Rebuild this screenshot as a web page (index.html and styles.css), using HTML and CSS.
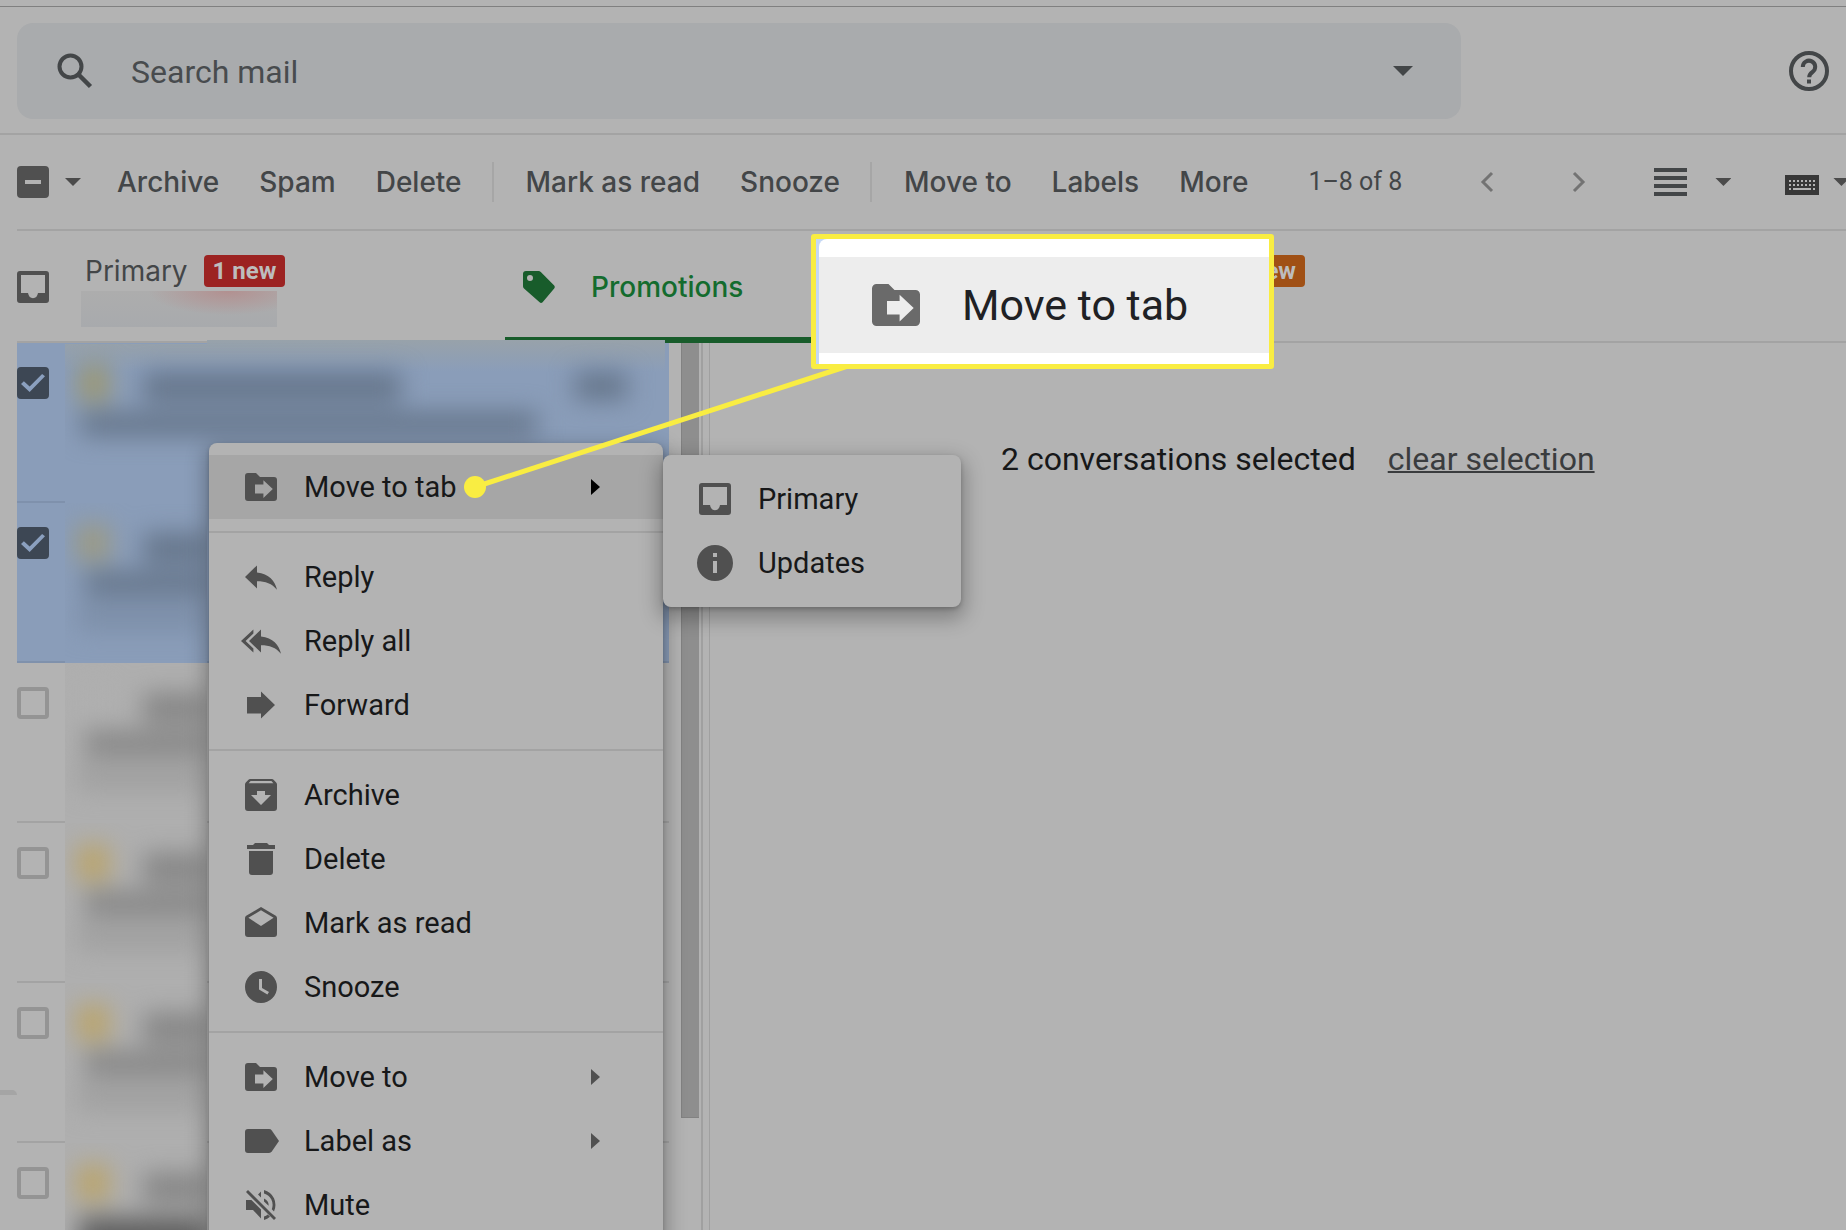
FILE: index.html
```html
<!DOCTYPE html>
<html lang="en">
<head>
<meta charset="utf-8">
<title>Mail – Promotions</title>
<link rel="stylesheet" href="styles.css">
</head>
<body>
<svg class="sprite" aria-hidden="true">
  <symbol id="i-folder" viewBox="0 0 20 20"><path fill-rule="evenodd" d="M3.500 3H7.500L9.500 5H16.500A1.500 1.500 0 0 1 18 6.500V15.500A1.500 1.500 0 0 1 16.500 17H3.500A1.500 1.500 0 0 1 2 15.500V4.500A1.500 1.500 0 0 1 3.500 3ZM11.200 6.600V8.700H7V13.200H11.200V15.500L15.900 11Z"/></symbol>
  <symbol id="i-reply" viewBox="0 0 20 20"><path d="M8 7.700V4.200L2 10L8 15.700V12.100C12.200 12.100 15.500 13.200 18 16.400C17 11.700 14 8.500 8 7.700Z"/></symbol>
  <symbol id="i-replyall" viewBox="0 0 20 20"><path d="M10 7.700V4.200L4 10L10 15.700V12.100C14.200 12.100 17.500 13.200 20 16.400C19 11.700 16 8.500 10 7.700Z"/><path d="M6.200 4.200V6.200L2.300 10L6.200 13.700V15.700L0 10Z"/></symbol>
  <symbol id="i-forward" viewBox="0 0 20 20"><path d="M3 6H10V3.200L17 10L10 16.800V14.200H3Z"/></symbol>
  <symbol id="i-archive" viewBox="0 0 20 20"><path fill-rule="evenodd" d="M4.600 2H15.400Q16 2 16.400 2.500L17.600 3.700Q18 4.200 18 4.800V16.500A1.500 1.500 0 0 1 16.500 18H3.500A1.500 1.500 0 0 1 2 16.500V4.800Q2 4.200 2.400 3.700L3.600 2.500Q4 2 4.600 2ZM4.800 3L3.800 4.100H16.200L15.200 3ZM8 8V10H5L10 15L15 10H12V8Z"/></symbol>
  <symbol id="i-delete" viewBox="0 0 20 20"><path d="M3 3H6L7 2H13L14 3H17V5H3ZM4 6H16V16.500A1.500 1.500 0 0 1 14.500 18H5.500A1.500 1.500 0 0 1 4 16.500Z"/></symbol>
  <symbol id="i-read" viewBox="0 0 20 20"><path fill-rule="evenodd" d="M10 2L17.400 6.400Q18 6.800 18 7.500V15.500A1.500 1.500 0 0 1 16.500 17H3.500A1.500 1.500 0 0 1 2 15.500V7.500Q2 6.800 2.600 6.400ZM10 3.600L3.700 7.400L10 11.500L16.300 7.400Z"/></symbol>
  <symbol id="i-snooze" viewBox="0 0 20 20"><path fill-rule="evenodd" d="M10 2A8 8 0 1 0 10 18A8 8 0 1 0 10 2ZM9 6H10.500V10.500L14 12.500L13.200 13.800L9 11.300Z"/></symbol>
  <symbol id="i-label" viewBox="0 0 20 20"><path d="M3.500 4H14Q14.900 4 15.400 4.700L19 10L15.400 15.300Q14.900 16 14 16H3.500A1.500 1.500 0 0 1 2 14.500V5.500A1.500 1.500 0 0 1 3.500 4Z"/></symbol>
  <symbol id="i-mute" viewBox="0 0 20 20"><path d="M3.500 2.500L17.500 16.500L16.500 17.500L2.500 3.500ZM2.500 7.500H5.200L10 12.300V16.700L6 12.500H2.500ZM10 3.300V6.300L8.500 4.800ZM11.500 6.800Q14 8 13.800 10.400L11.500 8.200ZM11.500 2.500A7.700 7.700 0 0 1 16.500 13.200L15.400 12.100A6 6 0 0 0 11.500 4.200ZM11.500 15.800Q12.600 15.500 13.400 14.800L14.500 15.900Q13.200 17 11.500 17.500Z"/></symbol>
  <symbol id="i-inbox" viewBox="0 0 20 20"><path fill-rule="evenodd" d="M3.500 2H16.500A1.500 1.500 0 0 1 18 3.500V16.500A1.500 1.500 0 0 1 16.500 18H3.500A1.500 1.500 0 0 1 2 16.500V3.500A1.500 1.500 0 0 1 3.500 2ZM4 4V13H7.500Q8 15.600 10 15.600T12.500 13H16V4Z"/></symbol>
  <symbol id="i-info" viewBox="0 0 20 20"><path fill-rule="evenodd" d="M10 1A9 9 0 1 0 10 19A9 9 0 1 0 10 1ZM9 5H11V7H9ZM9 9H11V15H9Z"/></symbol>
  <symbol id="i-tag" viewBox="0 0 20 20"><path fill-rule="evenodd" d="M3.500 2H9.800Q10.400 2 10.900 2.500L17.600 9.300Q18.300 10 17.600 10.800L11.800 17.600Q11 18.300 10.300 17.600L2.500 10.700Q2 10.200 2 9.600V3.500A1.500 1.500 0 0 1 3.500 2ZM5.500 4A1.500 1.500 0 1 0 5.500 7A1.500 1.500 0 1 0 5.500 4Z"/></symbol>
</svg>

<header class="header">
  <form class="search">
    <button class="icon-btn" type="button" aria-label="Search">
      <svg class="search-icon" viewBox="0 0 36 36"><circle cx="13.500" cy="13.500" r="11" fill="none" stroke="currentColor" stroke-width="4"/><path d="M21 21L33.500 33.500" stroke="currentColor" stroke-width="4.500"/></svg>
    </button>
    <input class="search-input" type="text" placeholder="Search mail" aria-label="Search mail">
    <button class="icon-btn" type="button" aria-label="Search options"><span class="caret caret-lg"></span></button>
  </form>
  <button class="icon-btn" type="button" aria-label="Help">
    <svg class="help-icon" viewBox="0 0 40 40"><circle cx="20" cy="20" r="18" fill="none" stroke="currentColor" stroke-width="4"/><path d="M13.800 16A6.200 6.200 0 1 1 23.500 21C21.300 22.500 20.200 23.500 20.200 26.200" fill="none" stroke="currentColor" stroke-width="4"/><path d="M18 28.500H22V32.500H18Z" fill="currentColor"/></svg>
  </button>
</header>

<div class="toolbar">
  <input class="box mixed" type="checkbox" aria-label="Select all">
  <button class="icon-btn pick" type="button" aria-label="Select"><span class="caret"></span></button>
  <div class="actions">
    <button type="button">Archive</button><button type="button">Spam</button><button type="button">Delete</button>
  </div>
  <div class="actions">
    <button type="button">Mark as read</button><button type="button">Snooze</button>
  </div>
  <div class="actions">
    <button type="button">Move to</button><button type="button">Labels</button><button type="button">More</button>
  </div>
  <div class="tools">
    <span class="count">1–8 of 8</span>
    <div class="pager">
      <button class="icon-btn" type="button" aria-label="Newer"><svg width="14" height="22" viewBox="0 0 14 22"><path d="M12 2L3 11L12 20" fill="none" stroke="#737373" stroke-width="3"/></svg></button>
      <button class="icon-btn" type="button" aria-label="Older"><svg width="14" height="22" viewBox="0 0 14 22"><path d="M2 2L11 11L2 20" fill="none" stroke="#737373" stroke-width="3"/></svg></button>
    </div>
    <button class="icon-btn split" type="button" aria-label="Split pane"><svg width="33" height="28" viewBox="0 0 33 28"><path d="M0 0H33V4H0ZM0 8H33V12H0ZM0 16H33V20H0ZM0 24H33V28H0Z" fill="currentColor"/></svg><span class="caret"></span></button>
    <button class="icon-btn keys" type="button" aria-label="Input tools"><svg width="34" height="20" viewBox="0 0 34 20"><path d="M0 0H34V20H0Z" fill="#383838"/><path d="M4 6H31M4 10H31M4 14H31" stroke="#b3b3b3" stroke-width="2" stroke-dasharray="2 2"/><path d="M9 14H26" stroke="#b3b3b3" stroke-width="2"/></svg><span class="caret"></span></button>
  </div>
</div>

<nav class="tabs">
  <a class="tab first" href="#primary">
    <svg class="icon"><use href="#i-inbox"/></svg>
    <span class="tab-body"><span class="tab-title">Primary <span class="badge">1 new</span></span><span class="senders"></span></span>
  </a>
  <a class="tab active" href="#promotions"><svg class="icon"><use href="#i-tag"/></svg><span>Promotions</span></a>
  <a class="tab last" href="#updates"><span class="badge orange">new</span></a>
</nav>

<main class="main">
  <div class="list">
    <div class="row selected lead"><input class="box" type="checkbox" checked aria-label="Select conversation 1"><div class="preview"></div></div>
    <div class="row selected"><input class="box" type="checkbox" checked aria-label="Select conversation 2"><div class="preview"></div></div>
    <div class="row plain"><input class="box" type="checkbox" aria-label="Select conversation 3"><div class="preview"></div></div>
    <div class="row"><input class="box" type="checkbox" aria-label="Select conversation 4"><div class="preview"></div></div>
    <div class="row"><input class="box" type="checkbox" aria-label="Select conversation 5"><div class="preview"></div></div>
    <div class="row dark"><input class="box" type="checkbox" aria-label="Select conversation 6"><div class="preview"></div></div>
  </div>
  <div class="scroll"><div class="thumb"></div></div>
  <section class="pane">
    <p class="status"><span>2 conversations selected</span><a href="#clear">clear selection</a></p>
  </section>
</main>
<div class="drawer-edge"></div>

<div class="menu context" role="menu">
  <div class="group">
    <button class="item current" type="button" role="menuitem"><svg class="icon"><use href="#i-folder"/></svg><span>Move to tab</span></button>
  </div>
  <div class="group">
    <button class="item" type="button" role="menuitem"><svg class="icon"><use href="#i-reply"/></svg><span>Reply</span></button>
    <button class="item" type="button" role="menuitem"><svg class="icon"><use href="#i-replyall"/></svg><span>Reply all</span></button>
    <button class="item" type="button" role="menuitem"><svg class="icon"><use href="#i-forward"/></svg><span>Forward</span></button>
  </div>
  <div class="group">
    <button class="item" type="button" role="menuitem"><svg class="icon"><use href="#i-archive"/></svg><span>Archive</span></button>
    <button class="item" type="button" role="menuitem"><svg class="icon"><use href="#i-delete"/></svg><span>Delete</span></button>
    <button class="item" type="button" role="menuitem"><svg class="icon"><use href="#i-read"/></svg><span>Mark as read</span></button>
    <button class="item" type="button" role="menuitem"><svg class="icon"><use href="#i-snooze"/></svg><span>Snooze</span></button>
  </div>
  <div class="group">
    <button class="item more" type="button" role="menuitem"><svg class="icon"><use href="#i-folder"/></svg><span>Move to</span></button>
    <button class="item more" type="button" role="menuitem"><svg class="icon"><use href="#i-label"/></svg><span>Label as</span></button>
    <button class="item" type="button" role="menuitem"><svg class="icon"><use href="#i-mute"/></svg><span>Mute</span></button>
  </div>
</div>

<div class="menu submenu" role="menu">
  <button class="item" type="button" role="menuitem"><svg class="icon"><use href="#i-inbox"/></svg><span>Primary</span></button>
  <button class="item" type="button" role="menuitem"><svg class="icon"><use href="#i-info"/></svg><span>Updates</span></button>
</div>

<svg class="pointer" viewBox="0 0 400 140" aria-hidden="true"><path d="M15 127L394 4" stroke="#f9ed42" stroke-width="5"/><circle cx="15" cy="127" r="11" fill="#f9ed42"/></svg>
<div class="callout"><div class="callout-card"><div class="callout-item"><svg class="icon"><use href="#i-folder"/></svg><span>Move to tab</span></div></div></div>
</body>
</html>
```
FILE: styles.css
```css
* { box-sizing: border-box; }

body {
  margin: 0;
  height: 100vh;
  overflow: hidden;
  position: relative;
  display: flex;
  flex-direction: column;
  background: #b3b3b3;
  color: #171819;
  font: 28px/32px Roboto, sans-serif;
}

button {
  border: 0;
  padding: 0;
  background: none;
  color: inherit;
  font: inherit;
}

a { color: inherit; text-decoration: none; }

.sprite { position: absolute; width: 0; height: 0; }
.icon { width: 40px; height: 40px; flex: none; fill: #505050; }
.icon-btn { display: flex; align-items: center; flex: none; color: #434648; }

.caret {
  width: 16px;
  height: 8px;
  flex: none;
  background: #4b4b4b;
  clip-path: polygon(0 0, 100% 0, 50% 100%);
}
.caret-lg { width: 20px; height: 10px; background: #434648; }

/* Header */
.header {
  flex: none;
  display: flex;
  align-items: center;
  gap: 328px;
  padding: 16px 17px 14px;
  border-top: 1px solid #808080;
  border-bottom: 2px solid #a3a3a3;
  margin-top: 6px;
}
.search {
  flex: 1;
  height: 96px;
  display: flex;
  align-items: center;
  padding: 0 48px 0 40px;
  border-radius: 16px;
  background: #a9abad;
}
.search-icon { width: 36px; height: 36px; }
.help-icon { width: 40px; height: 40px; }
.search-input {
  flex: 1;
  min-width: 0;
  margin-left: 38px;
  padding: 2px 0 0;
  border: 0;
  outline: 0;
  background: none;
  font: 32px/40px Roboto, sans-serif;
}
.search-input::placeholder { color: #484b4e; opacity: 1; }

/* Toolbar */
.toolbar {
  flex: none;
  height: 96px;
  display: flex;
  align-items: center;
  margin-left: 17px;
  border-bottom: 2px solid #a3a3a3;
  color: #434648;
  font-family: Inter, sans-serif;
  font-weight: 500;
}
.pick { margin: 0 36px 0 16px; }
.actions { display: flex; gap: 40px; white-space: nowrap; }
.actions + .actions {
  margin-left: 30px;
  padding: 4px 0 4px 32px;
  border-left: 2px solid #a6a6a6;
}
.tools { display: flex; align-items: center; margin-left: 60px; flex: none; }
.count { width: 172px; font: 25px/32px Roboto, sans-serif; }
.pager { display: flex; gap: 78px; margin-right: 68px; }
.split { gap: 28px; }
.keys { gap: 14px; margin-left: 54px; }
.keys svg { margin-top: 6px; }

.box {
  appearance: none;
  flex: none;
  width: 32px;
  height: 32px;
  margin: 0;
  display: grid;
  place-items: center;
  border: 4px solid #949494;
  border-radius: 4px;
}
.box:checked { border-color: #3d4754; background: #3d4754; }
.box:checked::before {
  content: "";
  width: 24px;
  height: 18px;
  background: #8ba0bf;
  clip-path: polygon(0 55%, 12% 40%, 36% 70%, 88% 0, 100% 12%, 36% 100%);
}
.mixed { border-color: #505050; background: #505050; }
.mixed::before { content: ""; width: 16px; height: 4px; background: #b3b3b3; }

/* Category tabs */
.tabs {
  flex: none;
  height: 112px;
  display: flex;
  border-bottom: 2px solid #a3a3a3;
  margin-left: 17px;
  font-family: Inter, sans-serif;
  color: #434648;
}
.tab {
  flex: none;
  width: 488px;
  display: flex;
  align-items: center;
  gap: 32px;
  padding: 0 14px;
  margin-bottom: -2px;
}
.tab.first { padding-left: 0; margin-left: -4px; width: 492px; gap: 28px; }
.active {
  color: #146c2e;
  font-weight: 500;
  border-bottom: 6px solid #185c2b;
  border-radius: 6px 6px 0 0;
  padding-top: 6px;
}
.active .icon { fill: #185c2b; }
.tab-body { display: flex; flex-direction: column; gap: 4px; padding-top: 8px; }
.tab-title { display: flex; align-items: center; gap: 16px; padding-left: 4px; }
.senders {
  width: 196px;
  height: 36px;
  background: radial-gradient(ellipse 80px 24px at 75% 0, #b29090, transparent), linear-gradient(#adadad, #a8aaad);
}
.badge {
  padding: 0 9px;
  border-radius: 4px;
  background: #9c2322;
  color: #bdbdbd;
  font: bold 24px/32px Roboto, sans-serif;
}
.last { align-items: flex-start; justify-content: flex-end; padding: 24px 176px 0 0; }
.orange { background: #a05015; }

/* Conversation list */
.main { flex: 1; min-height: 0; display: flex; }
.list { flex: none; width: 652px; margin-left: 17px; }
.row {
  --tone: #868686;
  --base: #afafaf;
  --star: #baa46c;
  height: 160px;
  display: flex;
  gap: 16px;
  border-bottom: 2px solid #a3a3a3;
}
.row .box { margin-top: 24px; }
.selected { --tone: #66768b; --base: #8a9db9; --star: #9c9a82; background: #8a9db9; border-color: #7f91ac; }
.plain { --star: #afafaf; }

/* Obscured sender and subject lines */
.preview {
  flex: none;
  width: 142px;
  height: 160px;
  overflow: hidden;
  background: var(--base);
}
.preview::before {
  content: "";
  display: block;
  height: 100%;
  background:
    linear-gradient(var(--star) 0 0) 12px 22px / 32px 36px no-repeat,
    linear-gradient(var(--tone) 0 0) 78px 30px / 64px 30px no-repeat,
    linear-gradient(var(--tone) 0 0) 20px 68px / 122px 24px no-repeat,
    linear-gradient(color-mix(in srgb, var(--tone) 35%, var(--base)) 0 0) 12px 98px / 130px 30px no-repeat;
  filter: blur(12px);
}
.lead .preview {
  width: 600px;
  height: 163px;
  margin-top: -3px;
  position: relative;
  background: linear-gradient(#98a2aa, var(--base) 32px);
  clip-path: polygon(0 4px, 142px 4px, 142px 0, 100% 0, 100% 100%, 0 100%);
}
.lead .preview::before {
  background:
    linear-gradient(#9c9873 0 0) 14px 24px / 30px 38px no-repeat,
    linear-gradient(var(--tone) 0 0) 78px 32px / 258px 30px no-repeat,
    linear-gradient(var(--tone) 0 0) 510px 32px / 52px 28px no-repeat,
    linear-gradient(var(--tone) 0 0) 16px 72px / 456px 24px no-repeat;
}
.dark .preview::before {
  background:
    linear-gradient(var(--star) 0 0) 12px 22px / 32px 36px no-repeat,
    linear-gradient(var(--tone) 0 0) 78px 30px / 64px 30px no-repeat,
    linear-gradient(#606060 0 0) 14px 74px / 140px 50px no-repeat;
}

.scroll { flex: none; width: 24px; margin-left: 10px; padding-left: 2px; border-right: 2px solid #a0a0a0; }
.thumb { width: 18px; height: 775px; background: #8e8e8e; border: 1px solid #828282; border-top: 0; border-right: 0; }
.pane { flex: 1; margin: 0 17px 0 6px; border-left: 1px solid #a0a0a0; }
.status {
  display: flex;
  gap: 32px;
  margin: 96px 0 0 291px;
  font-size: 32px;
  line-height: 40px;
  white-space: nowrap;
}
.status a { color: #3a3c3e; text-decoration: underline; text-decoration-thickness: 2px; }

.drawer-edge { position: absolute; left: 0; top: 1090px; width: 17px; height: 5px; background: #a5a5a5; border-top-right-radius: 5px; }

/* Menus */
.menu {
  position: absolute;
  padding: 12px 0;
  border-radius: 8px;
  background: #b3b3b3;
  font-size: 29px;
  box-shadow: 0 8px 20px 4px rgba(0, 0, 0, .28), 0 2px 4px rgba(0, 0, 0, .2);
}
.context { left: 209px; top: 443px; width: 454px; }
.submenu { left: 663px; top: 455px; width: 298px; }
.group + .group { margin-top: 12px; padding-top: 12px; border-top: 2px solid #a3a3a3; }
.item {
  width: 100%;
  height: 64px;
  display: flex;
  align-items: center;
  gap: 23px;
  padding: 0 63px 0 32px;
  text-align: left;
}
.current { background: #a6a6a6; }
.more::after, .current::after {
  content: "";
  width: 9px;
  height: 16px;
  margin-left: auto;
  background: #505050;
  clip-path: polygon(0 0, 100% 50%, 0 100%);
}
.current::after { background: #000; }

/* Highlighted callout */
.pointer { position: absolute; left: 460px; top: 360px; width: 400px; height: 140px; }
.callout {
  position: absolute;
  left: 811px;
  top: 234px;
  width: 463px;
  height: 135px;
  padding: 0 0 0 3px;
  border: 5px solid #f9ed42;
  border-radius: 3px;
  background: #c4d7f5;
}
.callout-card { height: 100%; padding: 18px 0 11px; border-top-left-radius: 8px; background: #fff; }
.callout-item {
  height: 96px;
  display: flex;
  align-items: center;
  gap: 36px;
  padding-left: 47px;
  background: #ededed;
  color: #202124;
  font-size: 43px;
  line-height: 52px;
}
.callout .icon { width: 60px; height: 60px; fill: #6a6a6a; }
```
